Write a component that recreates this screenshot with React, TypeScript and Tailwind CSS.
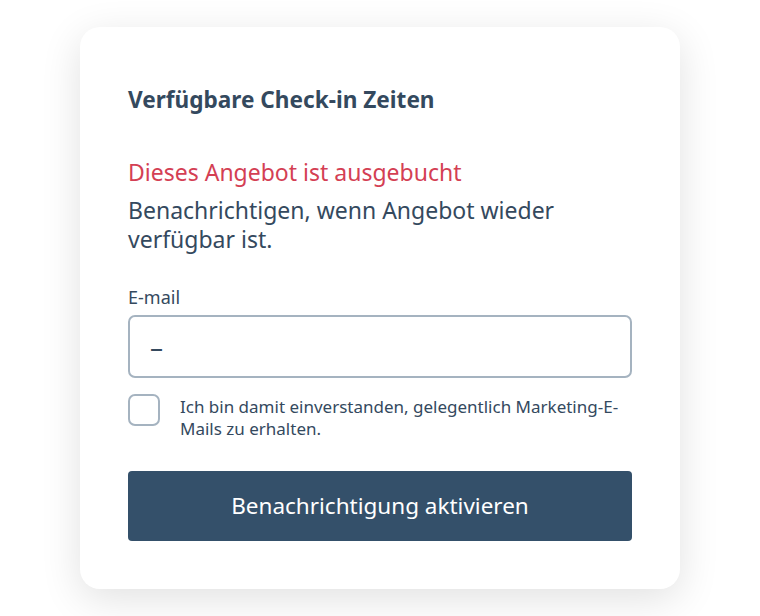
export default function App() {
  return (
    <div
      className="flex min-h-screen justify-center bg-white pt-[27px]"
      style={{ fontFamily: '"Noto Sans", "Open Sans", sans-serif' }}
    >
      <div className="h-[562px] w-[600px] rounded-[20px] bg-white px-12 pt-[59px] shadow-[0_10px_40px_rgba(0,0,0,0.12)]">
        <h2 className="text-[22.6px] font-bold leading-[28px] text-[#34495e]">Verfügbare Check-in Zeiten</h2>

        <p className="mt-[43px] text-[23px] leading-[30px] text-[#d43f54]">Dieses Angebot ist ausgebucht</p>
        <p className="mt-[9px] text-[23px] leading-[29px] text-[#34495e]">
          Benachrichtigen, wenn Angebot wieder verfügbar ist.
        </p>

        <label className="mt-[31px] block text-[18px] leading-[24px] text-[#34495e]">E-mail</label>
        <div className="mt-[6px] flex h-[63px] items-center rounded-[7px] border-2 border-[#a5b3c0] px-[20px]">
          <span className="text-[26px] leading-none text-[#34495e]">–</span>
        </div>

        <div className="mt-4 flex items-start gap-5">
          <div className="h-8 w-8 shrink-0 rounded-[7px] border-2 border-[#a5b3c0]" />
          <p className="mt-[2px] text-[17px] leading-[22px] text-[#34495e]">
            Ich bin damit einverstanden, gelegentlich Marketing-E-Mails zu erhalten.
          </p>
        </div>

        <button className="mt-[31px] flex h-[70px] w-full items-center justify-center rounded-[4px] bg-[#34506a] text-[22.5px] text-white">
          Benachrichtigung aktivieren
        </button>
      </div>
    </div>
  );
}
